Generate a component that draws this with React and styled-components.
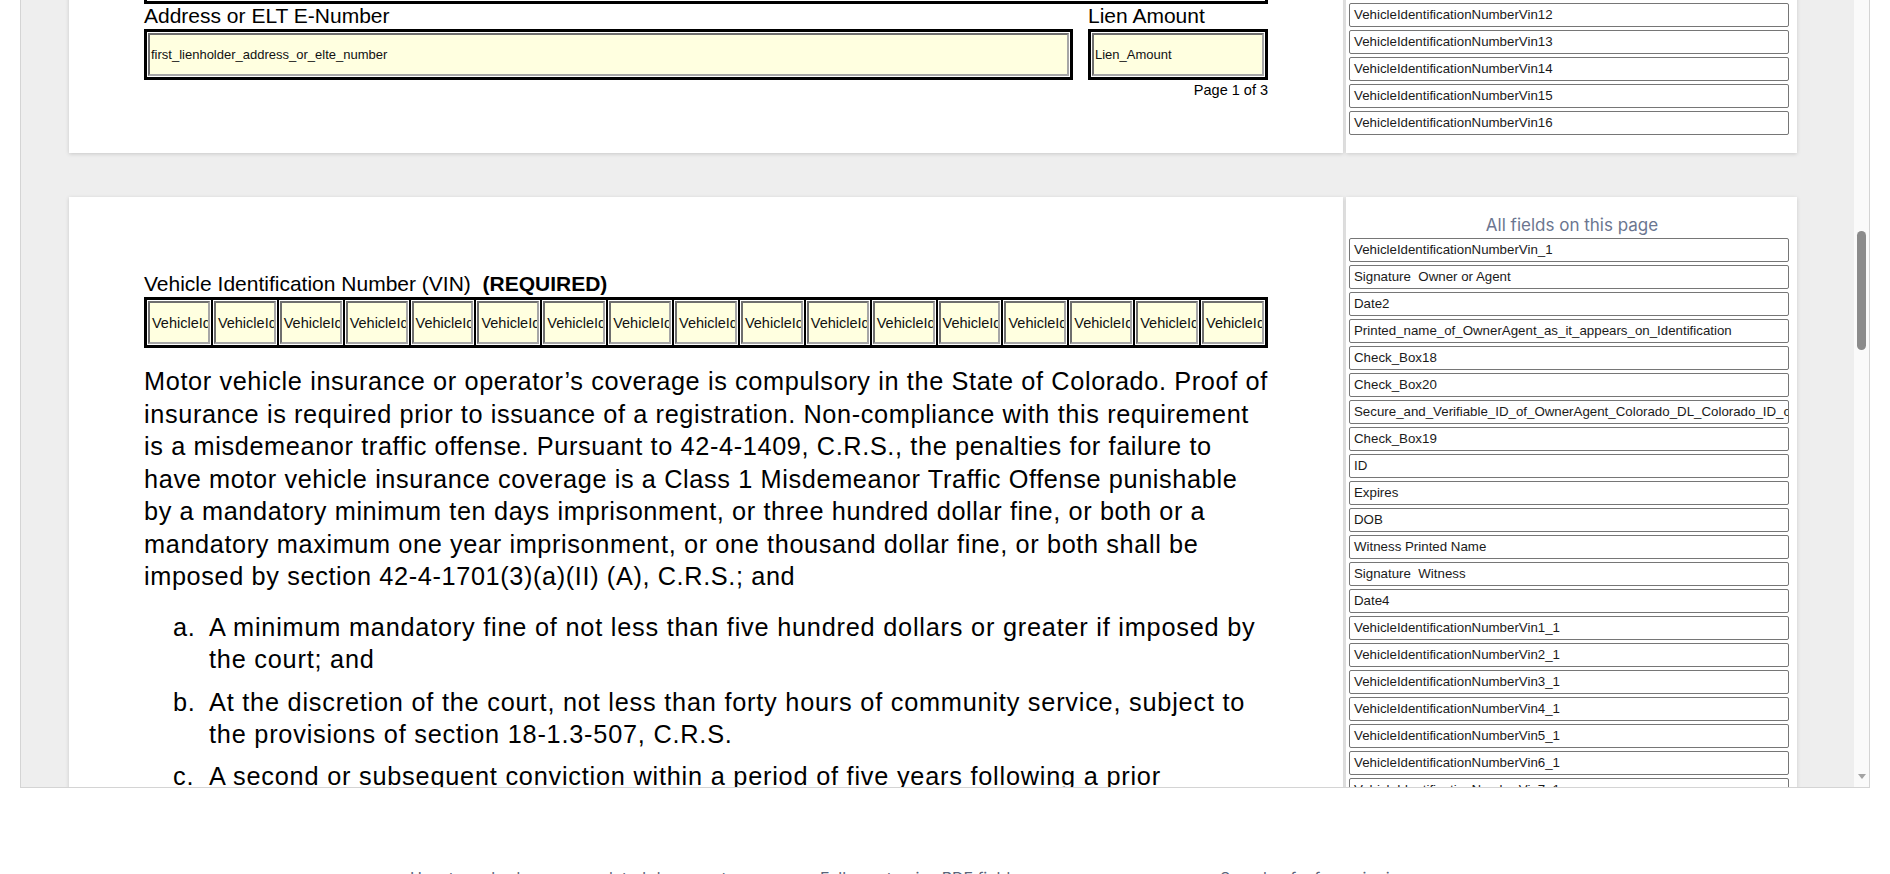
import React, { useLayoutEffect, useRef } from "react";
import styled, { createGlobalStyle } from "styled-components";

const GlobalStyle = createGlobalStyle`
  html, body {
    margin: 0;
    padding: 0;
    background: #fff;
  }
  body {
    font-family: "Liberation Sans", Arial, sans-serif;
    overflow: hidden;
  }
  * {
    box-sizing: border-box;
  }
`;

const Shell = styled.div`
  width: 1890px;
  height: 874px;
  overflow: hidden;
  background: #fff;
`;

const Frame = styled.div`
  margin-left: 20px;
  width: 1850px;
  height: 788px;
  border: 1px solid #d4d4d4;
  border-top: none;
  background: #eeeeee;
  display: flex;
`;

const Viewport = styled.div`
  flex: 1;
  overflow: hidden;
`;

const Pages = styled.div`
  display: flex;
  flex-direction: column;
  gap: 44px;
  padding: 40px 0 40px 48px;
`;

const PageRow = styled.div`
  display: flex;
  align-items: stretch;
  gap: 3px;
`;

const Page = styled.section`
  width: 1274px;
  min-height: 1649px;
  background: #fff;
  box-shadow: 0 1px 4px rgba(0, 0, 0, 0.16);
  display: flex;
  flex-direction: column;
  padding: ${(p) => p.$padTop || 0}px 75px ${(p) => p.$padBottom || 55}px 75px;
  color: #000;
`;

const PageBottom = styled.div`
  margin-top: auto;
  display: flex;
  flex-direction: column;
`;

const Sidebar = styled.aside`
  width: 451px;
  background: #fff;
  box-shadow: 0 1px 4px rgba(0, 0, 0, 0.14);
  padding: 18px 8px 18px 3px;
  display: flex;
  flex-direction: column;
  gap: 3px;
`;

const SidebarTitle = styled.div`
  font-family: Inter, "Open Sans", sans-serif;
  font-size: 17px;
  line-height: 20px;
  color: #6b7690;
  text-align: center;
  padding-left: 6px;
`;

const FieldItem = styled.div`
  height: 24px;
  flex: none;
  border: 1px solid #767676;
  border-radius: 2px;
  padding: 0 4px;
  font-size: 13.3px;
  line-height: 22px;
  color: #1a1a1a;
  white-space: pre;
  overflow: hidden;
`;

const Label = styled.div`
  font-size: 21px;
  line-height: 21px;
  white-space: pre;
  margin-bottom: ${(p) => p.$gap || 3}px;
`;

const Bold = styled.b`
  font-weight: 700;
`;

const FieldRow = styled.div`
  display: flex;
  gap: 15px;
  padding-top: 1px;
`;

const FieldColumn = styled.div`
  display: flex;
  flex-direction: column;
  width: ${(p) => p.$width};
  flex: ${(p) => (p.$grow ? 1 : "none")};
`;

const FormField = styled.div`
  height: 51px;
  border: 3px solid #000;
  padding: 1px;
  background: #fff;
  display: flex;
`;

const FieldInput = styled.div`
  flex: 1;
  min-width: 0;
  border: 2px solid;
  border-color: #6e6e6e #a6a6a6 #a6a6a6 #6e6e6e;
  background: #ffffe0;
  display: flex;
  align-items: center;
  padding-left: ${(p) => p.$pad || 1}px;
  font-size: ${(p) => p.$size || 13}px;
  color: #111;
  white-space: nowrap;
  overflow: hidden;
`;

const PageNumber = styled.div`
  font-size: 14.5px;
  line-height: 18px;
  text-align: right;
  margin-top: 1px;
`;

const VinRow = styled.div`
  display: grid;
  grid-template-columns: repeat(17, 1fr);
  height: 51px;
  border: 2px solid #000;
  background: #fff;
`;

const VinCell = styled.div`
  border: 1px solid #000;
  padding: 1px;
  display: flex;
  min-width: 0;
  overflow: hidden;
`;

const Paragraph = styled.div`
  margin-top: 17px;
  font-size: 25.3px;
  line-height: 32.55px;
  letter-spacing: 0.62px;
`;

const Line = styled.div`
  white-space: nowrap;
`;

const List = styled.div`
  margin-top: 18px;
  padding-left: 29px;
  display: flex;
  flex-direction: column;
  gap: 9.6px;
  font-size: 25.3px;
  line-height: 32.55px;
  letter-spacing: 0.78px;
`;

const ListItem = styled.div`
  display: flex;
`;

const Marker = styled.div`
  width: 36px;
  flex: none;
`;

const Track = styled.div`
  width: 15px;
  background: #fafafa;
  display: flex;
  flex-direction: column;
  align-items: center;
  padding-bottom: 8px;
`;

const Thumb = styled.div`
  width: 9px;
  height: ${(p) => p.$height}px;
  margin-top: ${(p) => p.$top}px;
  border-radius: 5px;
  background: #8b8b8b;
`;

const ArrowDown = styled.div`
  margin-top: auto;
  width: 0;
  height: 0;
  border-left: 4px solid transparent;
  border-right: 4px solid transparent;
  border-top: 5px solid #a3a3a3;
`;

const Footer = styled.nav`
  display: flex;
  padding: 80px 0 0 410px;
  font-family: Inter, "Open Sans", sans-serif;
  font-size: 16px;
  line-height: 20px;
  color: #5a6479;
`;

const FooterLink = styled.a`
  flex: none;
  width: ${(p) => p.$width}px;
  color: inherit;
  text-decoration: none;
`;

const pageOneFields = [
  "Date1",
  "Owner_Name",
  "Owner_Address",
  "City",
  "State",
  "Zip",
  "Phone",
  "Email",
  "Co_Owner_Name",
  "Co_Owner_Address",
  "Co_Owner_City",
  "Co_Owner_State",
  "Co_Owner_Zip",
  "Year",
  "Make",
  "Model",
  "Body_Style",
  "Color",
  "Title_Number",
  "Odometer",
  "Check_Box1",
  "Check_Box2",
  "Check_Box3",
  "Check_Box4",
  "Check_Box5",
  "Check_Box6",
  "Check_Box7",
  "Check_Box8",
  "Check_Box9",
  "Check_Box10",
  "Check_Box11",
  "Check_Box12",
  "Check_Box13",
  "Check_Box14",
  "Check_Box15",
  "Check_Box16",
  "Check_Box17",
  "Date_of_Purchase",
  "Purchase_Price",
  "Seller_Name",
  "Seller_Address",
  "Dealer_Number",
  "first_lienholder_name",
  "first_lienholder_address_or_elte_number",
  "Lien_Amount",
  "VehicleIdentificationNumberVin",
  ...Array.from({ length: 16 }, (_, i) => `VehicleIdentificationNumberVin${i + 1}`),
];

const pageTwoFields = [
  "VehicleIdentificationNumberVin_1",
  "Signature  Owner or Agent",
  "Date2",
  "Printed_name_of_OwnerAgent_as_it_appears_on_Identification",
  "Check_Box18",
  "Check_Box20",
  "Secure_and_Verifiable_ID_of_OwnerAgent_Colorado_DL_Colorado_ID_or_US_Passport",
  "Check_Box19",
  "ID",
  "Expires",
  "DOB",
  "Witness Printed Name",
  "Signature  Witness",
  "Date4",
  ...Array.from({ length: 16 }, (_, i) => `VehicleIdentificationNumberVin${i + 1}_1`),
];

const vinCells = [
  "VehicleIdentificationNumberVin_1",
  ...Array.from({ length: 16 }, (_, i) => `VehicleIdentificationNumberVin${i + 1}_1`),
];

const paragraphLines = [
  "Motor vehicle insurance or operator’s coverage is compulsory in the State of Colorado. Proof of",
  "insurance is required prior to issuance of a registration. Non-compliance with this requirement",
  "is a misdemeanor traffic offense. Pursuant to 42-4-1409, C.R.S., the penalties for failure to",
  "have motor vehicle insurance coverage is a Class 1 Misdemeanor Traffic Offense punishable",
  "by a mandatory minimum ten days imprisonment, or three hundred dollar fine, or both or a",
  "mandatory maximum one year imprisonment, or one thousand dollar fine, or both shall be",
  "imposed by section 42-4-1701(3)(a)(II) (A), C.R.S.; and",
];

const listItems = [
  {
    mark: "a.",
    lines: [
      "A minimum mandatory fine of not less than five hundred dollars or greater if imposed by",
      "the court; and",
    ],
  },
  {
    mark: "b.",
    lines: [
      "At the discretion of the court, not less than forty hours of community service, subject to",
      "the provisions of section 18-1.3-507, C.R.S.",
    ],
  },
  {
    mark: "c.",
    lines: [
      "A second or subsequent conviction within a period of five years following a prior",
      "conviction shall be punished by a minimum mandatory fine of not less than one thousand",
    ],
  },
];

const FieldList = ({ fields }) =>
  fields.map((f) => <FieldItem key={f}>{f}</FieldItem>);

const App = () => {
  const viewRef = useRef(null);
  const firstRowRef = useRef(null);

  useLayoutEffect(() => {
    const v = viewRef.current;
    const r = firstRowRef.current;
    if (!v || !r) return;
    const offset = r.getBoundingClientRect().bottom - v.getBoundingClientRect().top;
    v.scrollTop = offset - 153;
  }, []);

  return (
    <>
      <GlobalStyle />
      <Shell>
        <Frame>
          <Viewport ref={viewRef}>
            <Pages>
              <PageRow ref={firstRowRef}>
                <Page $padTop={60} $padBottom={54}>
                  <PageBottom>
                    <Label>First Lienholder Name</Label>
                    <FormField>
                      <FieldInput>first_lienholder_name</FieldInput>
                    </FormField>
                    <FieldRow>
                      <FieldColumn $grow>
                        <Label $gap={3}>Address or ELT E-Number</Label>
                        <FormField>
                          <FieldInput>first_lienholder_address_or_elte_number</FieldInput>
                        </FormField>
                      </FieldColumn>
                      <FieldColumn $width="180px">
                        <Label $gap={3}>Lien Amount</Label>
                        <FormField>
                          <FieldInput>Lien_Amount</FieldInput>
                        </FormField>
                      </FieldColumn>
                    </FieldRow>
                    <PageNumber>Page 1 of 3</PageNumber>
                  </PageBottom>
                </Page>
                <Sidebar>
                  <SidebarTitle>All fields on this page</SidebarTitle>
                  <FieldList fields={pageOneFields} />
                </Sidebar>
              </PageRow>

              <PageRow>
                <Page $padTop={76}>
                  <Label $gap={3}>
                    {"Vehicle Identification Number (VIN)  "}
                    <Bold>(REQUIRED)</Bold>
                  </Label>
                  <VinRow>
                    {vinCells.map((c) => (
                      <VinCell key={c}>
                        <FieldInput $pad={2} $size={14.5}>
                          {c.slice(0, 10)}
                        </FieldInput>
                      </VinCell>
                    ))}
                  </VinRow>
                  <Paragraph>
                    {paragraphLines.map((l) => (
                      <Line key={l}>{l}</Line>
                    ))}
                  </Paragraph>
                  <List>
                    {listItems.map((item) => (
                      <ListItem key={item.mark}>
                        <Marker>{item.mark}</Marker>
                        <div>
                          {item.lines.map((l) => (
                            <Line key={l}>{l}</Line>
                          ))}
                        </div>
                      </ListItem>
                    ))}
                  </List>
                </Page>
                <Sidebar>
                  <SidebarTitle>All fields on this page</SidebarTitle>
                  <FieldList fields={pageTwoFields} />
                </Sidebar>
              </PageRow>
            </Pages>
          </Viewport>
          <Track>
            <Thumb $top={231} $height={119} />
            <ArrowDown />
          </Track>
        </Frame>
        <Footer>
          <FooterLink $width={410} href="#">How to embed a pre-populated document</FooterLink>
          <FooterLink $width={400} href="#">Fully customize PDF fields</FooterLink>
          <FooterLink $width={400} href="#">Sample of a form signing</FooterLink>
        </Footer>
      </Shell>
    </>
  );
};

export default App;
